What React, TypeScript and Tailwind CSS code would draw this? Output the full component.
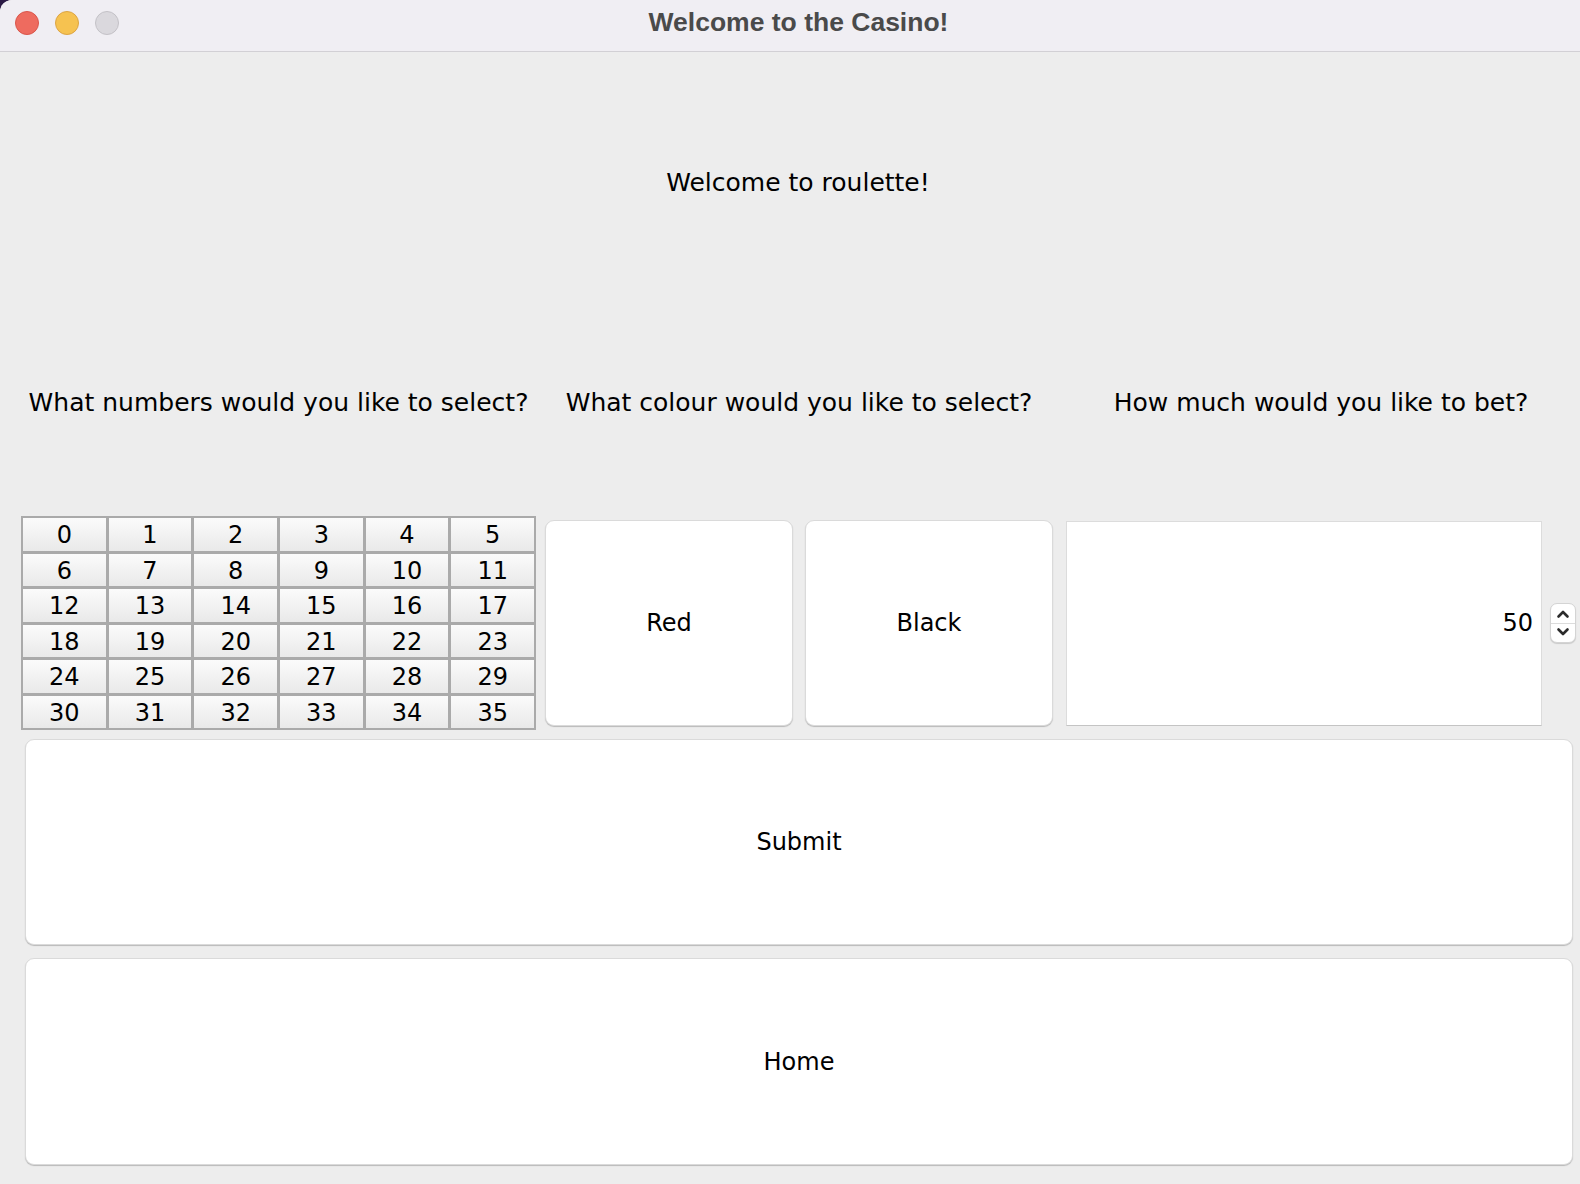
const numbers = Array.from({ length: 36 }, (_, i) => i);

function Spinner() {
  return (
    <div className="flex h-[40px] w-[26px] flex-col overflow-hidden rounded-[7px] border border-[#d4d4d4] bg-white shadow-[0_1px_1px_rgba(0,0,0,0.15)]">
      <div className="flex flex-1 items-center justify-center border-b border-[#dcdcdc] pt-[1px]">
        <svg width="14" height="10" viewBox="0 0 14 10">
          <polyline points="2.5,7.5 7,3 11.5,7.5" fill="none" stroke="#2b2b2b" strokeWidth="2.6" strokeLinecap="round" strokeLinejoin="round" />
        </svg>
      </div>
      <div className="flex flex-1 items-center justify-center pb-[1px]">
        <svg width="14" height="10" viewBox="0 0 14 10">
          <polyline points="2.5,2.5 7,7 11.5,2.5" fill="none" stroke="#2b2b2b" strokeWidth="2.6" strokeLinecap="round" strokeLinejoin="round" />
        </svg>
      </div>
    </div>
  );
}

function MacButton({ label, className }: { label: string; className: string }) {
  return (
    <button
      className={`flex items-center justify-center rounded-[9px] border border-[#dadada] bg-white text-[24px] text-black shadow-[0_1px_1px_rgba(0,0,0,0.22)] ${className}`}
    >
      {label}
    </button>
  );
}

export default function App() {
  return (
    <div className="h-[1184px] w-[1580px] bg-[#2b1a45]" style={{ fontFamily: '"DejaVu Sans", sans-serif' }}>
      <div className="flex h-full flex-col overflow-hidden rounded-tl-[12px] bg-[#ededed]">
        {/* title bar */}
        <div className="relative flex h-[52px] shrink-0 items-center justify-center border-b border-[#d2d0d5] bg-[#f0eef3] pb-[5px]">
          <div className="absolute left-[15px] top-[11px] flex gap-[16px]">
            <div className="h-[24px] w-[24px] rounded-full border border-[#d9564b] bg-[#ee6b5f]" />
            <div className="h-[24px] w-[24px] rounded-full border border-[#dca444] bg-[#f6c250]" />
            <div className="h-[24px] w-[24px] rounded-full border border-[#c3c1c6] bg-[#dad8dd]" />
          </div>
          <span
            className="pl-[17px] text-[26.5px] font-bold text-[#4a4a4a]"
            style={{ fontFamily: '"Liberation Sans", Arial, sans-serif' }}
          >
            Welcome to the Casino!
          </span>
        </div>

        {/* heading */}
        <div className="flex h-[262px] shrink-0 items-center justify-center pl-[16px] text-[25px] text-black">
          Welcome to roulette!
        </div>

        {/* labels */}
        <div className="flex h-[178px] shrink-0 items-center pl-[21px] text-[25px] text-black">
          <div className="w-[515px] text-center">What numbers would you like to select?</div>
          <div className="ml-[9px] w-[508px] text-center">What colour would you like to select?</div>
          <div className="ml-[13px] w-[510px] text-center">How much would you like to bet?</div>
        </div>

        {/* controls */}
        <div className="mt-[24px] flex h-[214px] shrink-0 items-center pl-[21px]">
          <div className="grid h-[214px] w-[515px] grid-cols-6 grid-rows-6 gap-[3px] bg-[#aaaaaa] p-[2px]">
            {numbers.map((n) => (
              <div
                key={n}
                className="flex items-center justify-center bg-gradient-to-b from-[#fbfbfb] to-[#e9e9e9] pt-[2px] text-[24px] leading-none text-black"
              >
                {n}
              </div>
            ))}
          </div>
          <MacButton label="Red" className="ml-[9px] h-[206px] w-[248px]" />
          <MacButton label="Black" className="ml-[12px] h-[206px] w-[248px]" />
          <div className="ml-[13px] flex h-[205px] w-[476px] items-center justify-end border border-[#dcdcdc] border-b-[#c4c4c4] bg-white pr-[8px] text-[24px] text-black">
            50
          </div>
          <div className="ml-[8px]">
            <Spinner />
          </div>
        </div>

        {/* actions */}
        <MacButton label="Submit" className="ml-[25px] mt-[9px] h-[206px] w-[1548px] shrink-0" />
        <MacButton label="Home" className="ml-[25px] mt-[13px] h-[207px] w-[1548px] shrink-0" />
      </div>
    </div>
  );
}
